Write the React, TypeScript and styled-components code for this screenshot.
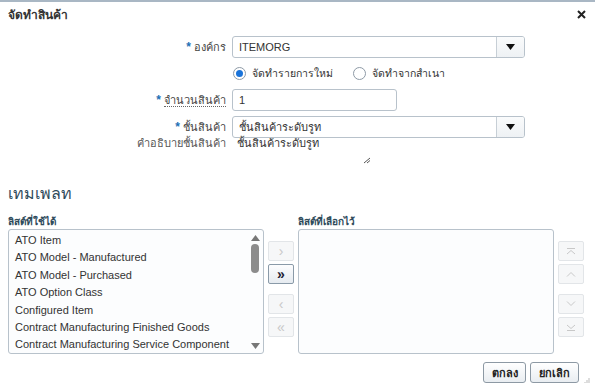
import React from "react";
import styled, { createGlobalStyle } from "styled-components";

const GlobalStyle = createGlobalStyle`
	html, body {
		margin: 0;
		padding: 0;
		background: #ffffff;
	}
	body {
		font-family: "Liberation Sans", "Noto Sans", "DejaVu Sans", sans-serif;
		color: #333333;
	}
`;

const availableItems = [
	"ATO Item",
	"ATO Model - Manufactured",
	"ATO Model - Purchased",
	"ATO Option Class",
	"Configured Item",
	"Contract Manufacturing Finished Goods",
	"Contract Manufacturing Service Component",
];

const Caret = () => (
	<svg width="9" height="6" viewBox="0 0 9 6">
		<path d="M0 0 L9 0 L4.5 6 Z" fill="#111" />
	</svg>
);

const App = () => {
	return (
		<Dialog>
			<GlobalStyle />
			<Header>
				<Title>จัดทำสินค้า</Title>
				<CloseButton>
					<svg width="9" height="9" viewBox="0 0 9 9">
						<path d="M1 1 L8 8 M8 1 L1 8" stroke="#222" strokeWidth="2" />
					</svg>
				</CloseButton>
			</Header>
			<Form>
				<Label>
					<Star>*</Star> องค์กร
				</Label>
				<Field>
					<Select width={293}>
						<SelectText>ITEMORG</SelectText>
						<DropButton>
							<Caret />
						</DropButton>
					</Select>
				</Field>

				<span />
				<RadioRow>
					<RadioOption>
						<Radio checked />
						จัดทำรายการใหม่
					</RadioOption>
					<RadioOption>
						<Radio />
						จัดทำจากสำเนา
					</RadioOption>
				</RadioRow>

				<Label>
					<Star>*</Star> <Underlined>จำนวนสินค้า</Underlined>
				</Label>
				<Field>
					<TextInput width={165}>1</TextInput>
				</Field>

				<Label>
					<Star>*</Star> ชั้นสินค้า
				</Label>
				<Field>
					<Select width={293}>
						<SelectText>ชั้นสินค้าระดับรูท</SelectText>
						<DropButton>
							<Caret />
						</DropButton>
					</Select>
				</Field>

				<PlainLabel>คำอธิบายชั้นสินค้า</PlainLabel>
				<ReadOnly>ชั้นสินค้าระดับรูท</ReadOnly>

				<span />
				<GripRow>
					<svg width="8" height="7" viewBox="0 0 8 7">
						<path d="M1 6 L7 1 M4 6 L7 3.5" stroke="#555" strokeWidth="1" />
					</svg>
				</GripRow>
			</Form>

			<SectionTitle>เทมเพลท</SectionTitle>

			<Shuttle>
				<ListColumn>
					<ListLabel>ลิสต์ที่ใช้ได้</ListLabel>
					<ListBox>
						<Items>
							{availableItems.map((item) => (
								<Item key={item}>{item}</Item>
							))}
						</Items>
						<ScrollBar>
							<svg width="9" height="6" viewBox="0 0 9 6">
								<path d="M0 6 L9 6 L4.5 0 Z" fill="#777" />
							</svg>
							<Thumb />
							<ScrollSpacer />
							<svg width="9" height="6" viewBox="0 0 9 6">
								<path d="M0 0 L9 0 L4.5 6 Z" fill="#777" />
							</svg>
						</ScrollBar>
					</ListBox>
				</ListColumn>

				<MoveButtons>
					<MoveButton>›</MoveButton>
					<MoveButton enabled>»</MoveButton>
					<ButtonGap />
					<MoveButton>‹</MoveButton>
					<MoveButton>«</MoveButton>
				</MoveButtons>

				<ListColumn>
					<ListLabel>ลิสต์ที่เลือกไว้</ListLabel>
					<ListBox />
				</ListColumn>

				<MoveButtons>
					<MoveButton>
						<svg width="10" height="7" viewBox="0 0 10 7">
							<path d="M1 0.5 H9 M1 6 L5 2.5 L9 6" stroke="#c8c8c8" fill="none" />
						</svg>
					</MoveButton>
					<MoveButton>
						<svg width="10" height="6" viewBox="0 0 10 6">
							<path d="M1 5.5 L5 1.5 L9 5.5" stroke="#c8c8c8" fill="none" />
						</svg>
					</MoveButton>
					<ButtonGap />
					<MoveButton>
						<svg width="10" height="6" viewBox="0 0 10 6">
							<path d="M1 0.5 L5 4.5 L9 0.5" stroke="#c8c8c8" fill="none" />
						</svg>
					</MoveButton>
					<MoveButton>
						<svg width="10" height="7" viewBox="0 0 10 7">
							<path d="M1 1 L5 4.5 L9 1 M1 6.5 H9" stroke="#c8c8c8" fill="none" />
						</svg>
					</MoveButton>
				</MoveButtons>
			</Shuttle>

			<Footer>
				<ActionButton width={43}>ตกลง</ActionButton>
				<ActionButton width={49}>ยกเลิก</ActionButton>
				<Corner>
					<svg width="7" height="7" viewBox="0 0 7 7">
						<path d="M6 1 V6 M4 3 V6 M2 5 V6" stroke="#bbb" strokeWidth="1" />
					</svg>
				</Corner>
			</Footer>
		</Dialog>
	);
};

const Dialog = styled.div`
	width: 595px;
	height: 388px;
	box-sizing: border-box;
	border-top: 2px solid #a9b7c4;
	background: #ffffff;
	overflow: hidden;
`;

const Header = styled.div`
	display: flex;
	align-items: center;
	justify-content: space-between;
	padding: 3px 9px 0 8px;
	height: 18px;
`;

const Title = styled.h1`
	margin: 0;
	font-size: 12px;
	font-weight: bold;
	color: #333;
`;

const CloseButton = styled.span`
	display: flex;
	align-items: center;
`;

const Form = styled.div`
	display: grid;
	grid-template-columns: 226px 1fr;
	column-gap: 6px;
	row-gap: 5px;
	align-items: center;
	margin-top: 13px;
	font-size: 11px;
`;

const Label = styled.div`
	text-align: right;
	color: #444;
	font-size: 11px;
`;

const PlainLabel = styled(Label)`
	color: #555;
	margin-top: -9px;
`;

const Star = styled.span`
	color: #1f6fb5;
	font-weight: bold;
	font-size: 12px;
`;

const Underlined = styled.span`
	border-bottom: 1px dotted #666;
`;

const Field = styled.div`
	display: flex;
	align-items: center;
	height: 22px;
`;

const Select = styled.div<{ width: number }>`
	display: flex;
	align-items: stretch;
	width: ${(p) => p.width}px;
	height: 22px;
	box-sizing: border-box;
	border: 1px solid #b8c2cb;
	border-radius: 3px;
	background: #fff;
`;

const SelectText = styled.div`
	flex: 1;
	display: flex;
	align-items: center;
	padding-left: 6px;
	font-size: 11px;
	color: #333;
`;

const DropButton = styled.div`
	width: 27px;
	display: flex;
	align-items: center;
	justify-content: center;
	border-left: 1px solid #c7cfd6;
	background: linear-gradient(#fafbfc, #eef1f4);
	border-radius: 0 2px 2px 0;
`;

const TextInput = styled.div<{ width: number }>`
	width: ${(p) => p.width}px;
	height: 22px;
	box-sizing: border-box;
	border: 1px solid #b8c2cb;
	border-radius: 3px;
	padding-left: 6px;
	display: flex;
	align-items: center;
	font-size: 11px;
	color: #333;
`;

const RadioRow = styled.div`
	display: flex;
	align-items: center;
	gap: 20px;
	height: 21px;
	padding-left: 1px;
`;

const RadioOption = styled.label`
	display: flex;
	align-items: center;
	gap: 6px;
	font-size: 10.5px;
	color: #333;
`;

const Radio = styled.span<{ checked?: boolean }>`
	width: 13px;
	height: 13px;
	box-sizing: border-box;
	border-radius: 50%;
	border: 1px solid #8e9aa6;
	background: #fff;
	position: relative;
	&::after {
		content: "";
		display: ${(p) => (p.checked ? "block" : "none")};
		position: absolute;
		left: 2px;
		top: 2px;
		width: 7px;
		height: 7px;
		border-radius: 50%;
		background: #1a73d9;
	}
`;

const ReadOnly = styled.div`
	padding-left: 5px;
	margin-top: -9px;
	font-size: 11px;
	color: #333;
`;

const GripRow = styled.div`
	height: 14px;
	margin-top: -7px;
	padding-left: 131px;
	display: flex;
	align-items: flex-end;
`;

const SectionTitle = styled.h2`
	margin: 19px 0 0 8px;
	font-size: 16px;
	font-weight: normal;
	color: #2f4b5b;
	height: 22px;
	line-height: 22px;
`;

const Shuttle = styled.div`
	display: flex;
	align-items: flex-start;
	gap: 4px;
	padding-left: 8px;
	margin-top: 10px;
`;

const ListColumn = styled.div`
	display: flex;
	flex-direction: column;
	width: 256px;
`;

const ListLabel = styled.div`
	font-size: 10px;
	font-weight: bold;
	color: #2f4b5b;
	height: 13px;
	line-height: 13px;
	margin-bottom: 1px;
`;

const ListBox = styled.div`
	height: 125px;
	box-sizing: border-box;
	border: 1px solid #b8c2cb;
	border-radius: 3px;
	background: #fcfdfe;
	display: flex;
`;

const Items = styled.div`
	flex: 1;
	padding: 2px 0 0 6px;
`;

const Item = styled.div`
	height: 17.4px;
	line-height: 17px;
	font-size: 11px;
	color: #333;
	white-space: nowrap;
`;

const ScrollBar = styled.div`
	width: 12px;
	margin-right: 2px;
	display: flex;
	flex-direction: column;
	align-items: center;
	padding: 5px 0 4px;
`;

const Thumb = styled.div`
	width: 8px;
	height: 29px;
	margin-top: 3px;
	border-radius: 4px;
	background: #8c8c8c;
`;

const ScrollSpacer = styled.div`
	flex: 1;
`;

const MoveButtons = styled.div`
	display: flex;
	flex-direction: column;
	gap: 3px;
	padding-top: 26px;
`;

const ButtonGap = styled.div`
	height: 4px;
`;

const MoveButton = styled.div<{ enabled?: boolean }>`
	width: 26px;
	height: 20px;
	box-sizing: border-box;
	display: flex;
	align-items: center;
	justify-content: center;
	border-radius: 2px;
	font-size: 14px;
	line-height: 1;
	border: 1px solid ${(p) => (p.enabled ? "#8a9aa8" : "#e2e5e8")};
	background: ${(p) =>
		p.enabled ? "linear-gradient(#fdfdfe, #e6ebf0)" : "#f6f7f8"};
	color: ${(p) => (p.enabled ? "#223" : "#c8c8c8")};
	font-weight: ${(p) => (p.enabled ? "bold" : "normal")};
`;

const Footer = styled.div`
	display: flex;
	justify-content: flex-end;
	align-items: flex-start;
	gap: 4px;
	margin-top: 8px;
	padding-right: 5px;
`;

const ActionButton = styled.div<{ width: number }>`
	width: ${(p) => p.width}px;
	height: 21px;
	box-sizing: border-box;
	display: flex;
	align-items: center;
	justify-content: center;
	border: 1px solid #8d99a4;
	border-radius: 3px;
	background: linear-gradient(#ffffff, #e9edf1);
	font-size: 11px;
	font-weight: bold;
	color: #222;
`;

const Corner = styled.div`
	align-self: flex-end;
	margin-bottom: -5px;
`;

export default App;
